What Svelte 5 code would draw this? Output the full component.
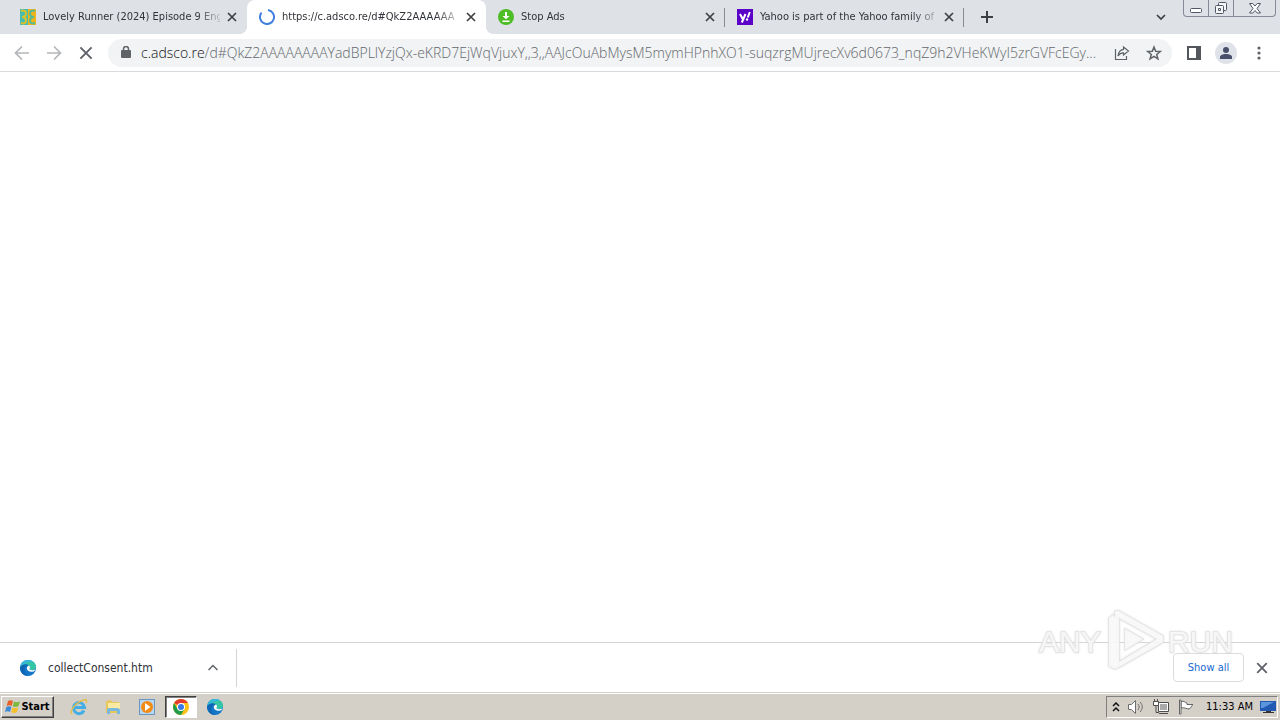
<script>
  const tabs = [
    { icon: 'drama', title: 'Lovely Runner (2024) Episode 9 Eng' },
    { icon: 'spinner', title: 'https://c.adsco.re/d#QkZ2AAAAAA', active: true },
    { icon: 'stop', title: 'Stop Ads' },
    { icon: 'yahoo', title: 'Yahoo is part of the Yahoo family of' }
  ];
  const host = 'c.adsco.re';
  const path = '/d#QkZ2AAAAAAAAYadBPLlYzjQx-eKRD7EjWqVjuxY,,3,,AAJcOuAbMysM5mymHPnhXO1-suqzrgMUjrecXv6d0673_nqZ9h2VHeKWyI5zrGVFcEGy...';
</script>

{#snippet edge(size)}
  <svg width={size} height={size} viewBox="0 0 16 16" aria-hidden="true">
    <circle cx="8" cy="8" r="8" fill="#1476c6" />
    <path d="M.2 7C1 2.500 4.300 0 8 0c4.500 0 8 3 8 6.500 0 2.500-2 3.800-4 3.800-1.600 0-2.600-.6-2.600-1.200 0-.5.6-.7.6-1.700C10 5.500 8 4.200 5.500 4.200 3 4.200 1 5.500.2 7z" fill="#35c5a5" />
    <path d="M.2 7C1 2.500 4.300 0 8 0c2 0 3.800.6 5.200 1.700C8 1.500 3 3.500.2 7z" fill="#38b6df" />
    <path d="M6.800 8.500c0-1.500.9-2.600 2.200-3 .7.5 1 1.200 1 1.900 0 1-.6 1.200-.6 1.700 0 .6 1 1.200 2.600 1.200 1.300 0 2.500-.4 3.300-1.100-.3 1.900-1.900 2.600-3.800 2.600-2.600 0-4.700-1.400-4.700-3.300z" fill="#fff" />
    <path d="M.1 7.200C1.200 5.500 3.200 4.400 5.500 4.400c1 0 1.800.2 2.500.6C6 5.500 4.300 7.500 4.300 10c0 2.700 1.700 5 4.200 6C3.500 16.200-.4 12 .1 7.200z" fill="#0f66b4" />
  </svg>
{/snippet}

{#snippet favicon(name)}
  {#if name === 'drama'}
    <svg width="16" height="16" viewBox="0 0 16 16" aria-hidden="true">
      <path fill="#49bcae" d="M0 0h8v16H0z" /><path fill="#edb51b" d="M8 0h8v16H8z" />
      <path d="M1 2c3-1 5 0 5 2.500S4 8 2 8c3 0 4 1 4 3.500S4 15 1 14" fill="none" stroke="#d9c22c" stroke-width="2" />
      <path d="M15 2c-3-1-5 0-5 2.500S12 8 14 8c-3 0-4 1-4 3.500s2 3.500 5 2.500" fill="none" stroke="#55bb96" stroke-width="2" />
    </svg>
  {:else if name === 'spinner'}
    <svg width="16" height="16" viewBox="0 0 16 16" aria-hidden="true">
      <path d="M9 1.100A7 7 0 1 1 2.500 3.700" fill="none" stroke="#3f7fe0" stroke-width="2" />
    </svg>
  {:else if name === 'stop'}
    <svg width="16" height="16" viewBox="0 0 16 16" aria-hidden="true">
      <circle cx="8" cy="8" r="8" fill="#4fbd27" />
      <path d="M7 3h2v4h2.500L8 10.300 4.500 7H7zM4.500 11.500h7V13h-7z" fill="#fff" />
    </svg>
  {:else}
    <svg width="16" height="16" viewBox="0 0 16 16" aria-hidden="true">
      <path fill="#5b00c8" d="M0 0h16v16H0z" />
      <path d="M3 5l2.700 5M8.500 5L4.800 13.500M12.800 3l-2 5.500" fill="none" stroke="#fff" stroke-width="2" />
      <circle cx="10" cy="10.500" r="1.200" fill="#fff" />
    </svg>
  {/if}
{/snippet}

{#snippet cross(size, color, width)}
  <svg width={size} height={size} viewBox="0 0 10 10" aria-hidden="true">
    <path d="M1 1l8 8M9 1L1 9" fill="none" stroke={color} stroke-width={width} />
  </svg>
{/snippet}

<div class="screen">
  <header class="strip">
    <div class="tabs" role="tablist">
      {#each tabs as tab, i}
        <div class="tab" class:active={tab.active} class:divided={i > 1}>
          {@render favicon(tab.icon)}
          <button class="title" role="tab" aria-selected={!!tab.active}>{tab.title}</button>
          <button class="close" aria-label="Close {tab.title}">{@render cross(10, '#3c4043', 1.7)}</button>
        </div>
      {/each}
    </div>
    <button class="new" aria-label="New tab">
      <svg width="12" height="12" viewBox="0 0 12 12"><path d="M6 0v12M0 6h12" stroke="#3c4043" stroke-width="2" /></svg>
    </button>
    <button class="search" aria-label="Search tabs">
      <svg width="10" height="7" viewBox="0 0 10 7"><path d="M1 1l4 4 4-4" fill="none" stroke="#3c4043" stroke-width="1.700" /></svg>
    </button>
    <div class="controls">
      <button aria-label="Minimize">
        <svg width="14" height="14" viewBox="0 0 14 14"><rect x="1.500" y="7.500" width="11" height="4" rx="1" fill="#fff" stroke="#535666" /></svg>
      </button>
      <button aria-label="Restore">
        <svg width="14" height="14" viewBox="0 0 14 14" fill="#f5f6f8" stroke="#535666"><rect x="4.500" y="1.500" width="8" height="8" rx="1" /><rect x="1.500" y="4.500" width="8" height="8" rx="1" /><path d="M4.500 7.500h2v2h-2z" /></svg>
      </button>
      <button aria-label="Close">
        <svg width="14" height="14" viewBox="0 0 14 14"><path d="M1.500 2.500h3.300L7 5l2.200-2.500h3.300L9 7.500l3.500 4.500H9.200L7 9.500 4.800 12H1.500L5 7.500z" fill="#fff" stroke="#535666" /></svg>
      </button>
    </div>
  </header>

  <nav class="toolbar">
    <button aria-label="Back"><svg width="16" height="16" viewBox="0 0 16 16"><path d="M15 8H2M8 1.500L1.500 8 8 14.500" fill="none" stroke="#b4b6b9" stroke-width="1.700" /></svg></button>
    <button aria-label="Forward"><svg width="16" height="16" viewBox="0 0 16 16"><path d="M1 8h13M8 1.500L14.500 8 8 14.500" fill="none" stroke="#b4b6b9" stroke-width="1.700" /></svg></button>
    <button aria-label="Stop loading">{@render cross(14, '#5f6368', 1.4)}</button>
    <div class="omnibox">
      <svg class="lock" width="10" height="13" viewBox="0 0 10 13" aria-hidden="true"><rect y="4" width="10" height="8" rx="1" fill="#5f6368" /><path d="M2.500 5V3a2.500 2.500 0 0 1 5 0v2" fill="none" stroke="#5f6368" stroke-width="1.500" /></svg>
      <button class="url"><span class="host">{host}</span>{path}</button>
      <button aria-label="Share">
        <svg width="16" height="16" viewBox="0 0 16 16" fill="none" stroke="#5f6368" stroke-width="1.200"><path d="M1.500 4v10.500h11V11" /><path d="M9.500 2l5 4-5 4V7.800C7 7.800 5.400 8.600 4 11c.3-3.500 2-6.200 5.500-6.700z" /></svg>
      </button>
      <button aria-label="Bookmark">
        <svg width="16" height="16" viewBox="0 0 16 16"><path d="M8 2l1.700 4.200 4.500.3-3.500 2.900 1.200 4.400L8 11.300l-3.900 2.500 1.200-4.400-3.500-2.900 4.500-.3z" fill="none" stroke="#5f6368" stroke-width="1.500" /></svg>
      </button>
    </div>
    <button aria-label="Side panel"><svg width="14" height="14" viewBox="0 0 14 14"><rect x="1" y="1" width="12" height="12" fill="#fff" stroke="#53565b" stroke-width="2" /><path d="M9 1h5v12H9z" fill="#53565b" /></svg></button>
    <button aria-label="Profile"><svg width="22" height="22" viewBox="0 0 22 22"><circle cx="11" cy="11" r="11" fill="#dfe2e8" /><circle cx="11" cy="8" r="3" fill="#474f6b" /><path d="M5 17v-2c0-2 3-3 6-3s6 1 6 3v2z" fill="#474f6b" /></svg></button>
    <button aria-label="Menu"><svg width="4" height="16" viewBox="0 0 4 16" fill="#5f6368"><circle cx="2" cy="3" r="1.600" /><circle cx="2" cy="8" r="1.600" /><circle cx="2" cy="13" r="1.600" /></svg></button>
  </nav>

  <main></main>

  <section class="downloads" aria-label="Downloads">
    <div class="item">
      {@render edge(16)}
      <a href="#file">collectConsent.htm</a>
      <button aria-label="Download options"><svg width="10" height="7" viewBox="0 0 10 7"><path d="M.500 6L5 1.500 9.500 6" fill="none" stroke="#5f6368" stroke-width="1.500" /></svg></button>
    </div>
    <button class="all">Show all</button>
    <button class="dismiss" aria-label="Close downloads">{@render cross(12, '#5f6368', 1.5)}</button>
  </section>

  <footer class="taskbar">
    <button class="start">
      <svg width="16" height="16" viewBox="0 0 16 16" aria-hidden="true">
        <path d="M3 2c2-1.300 3.500-.8 5 0L6.700 7c-1.500-.9-3-1-5 0z" fill="#e9602a" /><path d="M9 2.500c1.500.8 3.500 1 6-.3L13.500 7c-2 1.200-4 1-5.700.3z" fill="#7bb83b" />
        <path d="M1.400 8c2-1 3.500-.9 5 0L5 13c-1.500-.8-3-.9-5 0z" fill="#3a8bd8" /><path d="M7.500 8.400c1.700.8 3.500 1 5.700-.2L12 13c-2 1.300-4 1.200-5.800.3z" fill="#f5bf2b" />
      </svg>
      Start
    </button>
    <div class="apps">
      <button aria-label="Internet Explorer">
        <svg width="18" height="18" viewBox="0 0 18 18"><path d="M14 12.500A5.500 5.500 0 1 1 14.500 9.500H5" fill="none" stroke="#43aee5" stroke-width="3" /><path d="M2 16C-1 13 6 4 14 2c3-.7 3 1 2 3" fill="none" stroke="#e4bd48" stroke-width="1.500" /></svg>
      </button>
      <button aria-label="File Explorer">
        <svg width="18" height="18" viewBox="0 0 18 18"><path d="M2 3l5-1 1 2h7v11H2z" fill="#e7c65b" /><path d="M4 5h12v7H4z" fill="#fbeaa1" /><path d="M3 16v-4c0-2 2-2 3-2h7c2 0 3 1 3 2v4h-3v-3H6v3z" fill="#78b9dd" /></svg>
      </button>
      <button aria-label="Media Player">
        <svg width="18" height="18" viewBox="0 0 18 18"><rect x="1.500" y="1.500" width="15" height="15" fill="#b9d5ef" stroke="#6797c5" /><circle cx="9" cy="9" r="6" fill="#f28a15" /><path d="M7 5l5.500 4L7 13z" fill="#fff" /></svg>
      </button>
      <button class="current" aria-label="Chrome">
        <svg width="16" height="16" viewBox="0 0 16 16"><circle cx="8" cy="8" r="8" fill="#fbc116" /><path d="M8 8L1.100 4A8 8 0 0 1 14.900 4H8z" fill="#e33b2e" /><path d="M1.100 4A8 8 0 0 0 8 16l3.500-6L8 8 4.500 10z" fill="#249b49" /><circle cx="8" cy="8" r="4" fill="#fff" /><circle cx="8" cy="8" r="3" fill="#3879e8" /></svg>
      </button>
      <button aria-label="Edge">{@render edge(16)}</button>
    </div>
    <div class="tray">
      <button aria-label="Show hidden icons"><svg width="8" height="10" viewBox="0 0 8 10"><path d="M1 4l3-3 3 3M1 9l3-3 3 3" fill="none" stroke="#111" stroke-width="1.500" /></svg></button>
      <button aria-label="Volume"><svg width="18" height="18" viewBox="0 0 18 18" stroke="#6e6e6e"><path d="M1.500 6.500h3l4-4v13l-4-4h-3z" fill="#fff" /><path d="M11 6c1.500 2 1.500 4 0 6M13 4c3 3 3 7 0 10" fill="none" /></svg></button>
      <button aria-label="Network"><svg width="18" height="18" viewBox="0 0 18 18" stroke="#4e4e4e"><path d="M6.500 4.500h10v9h-10z" fill="#fff" /><path d="M8 6h7v6H8z" fill="#aaa" stroke="none" /><path d="M7 15.500h9M4 8v6.500h3" fill="none" /><path d="M1.500 3.500h5v4h-5zM2.500 1v2M5.500 1v2" fill="#fff" /></svg></button>
      <button aria-label="Action Center"><svg width="18" height="18" viewBox="0 0 18 18" fill="#fff" stroke="#666"><path d="M4 3.500c3-1 4 1 6 1.500v1.500h6c-2 1-1 3-4 4.500-3 0-4-2-8-1z" /><path d="M2.500 2v14h1.500V2z" /></svg></button>
      <time>11:33 AM</time>
      <button aria-label="Show desktop"><svg width="16" height="14" viewBox="0 0 16 14"><path d="M0 1h16v10H0z" fill="#2159b3" /><path d="M1 2h13L3 8H1z" fill="#5a96dc" /><path d="M6 11h5v1h3v1H3v-1h3z" fill="#333" /></svg></button>
    </div>
  </footer>

  <svg class="watermark" width="202" height="70" viewBox="0 0 202 70" aria-hidden="true">
    <g fill="#fff" fill-opacity=".7" stroke="#e2e2e2" stroke-width="1.500" paint-order="stroke">
      <text x="6" y="47">ANY</text>
      <text x="135" y="47">RUN</text>
      <path fill-rule="evenodd" d="M82 6l4 0 44 25v6l-5 3-37 21-6 3-6-3V13l4-3 2 2zM86 13v44l38-23zM92 24l18 10-18 11z" />
    </g>
  </svg>
</div>

<style>
  .screen {
    position: relative;
    display: flex;
    flex-direction: column;
    min-height: 100vh;
    background: #fff;
    color: #303338;
    font: 11px/16px "DejaVu Sans Condensed", "DejaVu Sans", sans-serif;
  }
  button {
    display: flex;
    align-items: center;
    justify-content: center;
    flex: none;
    padding: 0;
    border: 0;
    background: none;
    color: inherit;
    font: inherit;
  }
  svg { display: block; flex: none; }

  .strip { display: flex; height: 34px; padding-left: 8px; background: #dee1e6; }
  .tabs { display: flex; min-width: 0; }
  .tab {
    position: relative;
    display: flex;
    align-items: center;
    width: 239px;
    min-width: 0;
    box-sizing: border-box;
    padding: 0 10px 0 12px;
    gap: 7px;
  }
  .active { background: #fff; border-radius: 8px 8px 0 0; }
  .active::before, .active::after {
    content: '';
    position: absolute;
    bottom: 0;
    width: 8px;
    height: 8px;
  }
  .active::before { left: -8px; background: radial-gradient(circle at 0 0, transparent 8px, #fff 8px); }
  .active::after { right: -8px; background: radial-gradient(circle at 100% 0, transparent 8px, #fff 8px); }
  .divided::after {
    content: '';
    position: absolute;
    right: 0;
    top: 8px;
    width: 1px;
    height: 19px;
    background: #868b90;
  }
  .title {
    display: block;
    flex: 1;
    min-width: 0;
    overflow: hidden;
    white-space: nowrap;
    text-align: left;
    mask-image: linear-gradient(to right, #000 calc(100% - 24px), rgb(0 0 0 / 20%));
  }
  .close { width: 10px; }
  .new { width: 28px; margin-left: 9px; }
  .search { width: 28px; margin-left: auto; }
  .controls {
    display: flex;
    height: 17px;
    box-sizing: border-box;
    margin: 0 4px 0 8px;
    border: 1px solid #868a98;
    border-top: 0;
    border-radius: 0 0 4px 4px;
  }
  .controls button { width: 25px; border-right: 1px solid #868a98; }
  .controls button:last-child { width: 41px; border: 0; }

  .toolbar {
    display: flex;
    align-items: center;
    height: 37px;
    padding: 0 5px 0 6px;
    border-bottom: 1px solid #d8dadd;
  }
  .toolbar > button { width: 32px; height: 32px; }
  .toolbar > button:last-child { width: 33px; }
  .omnibox {
    display: flex;
    align-items: center;
    flex: 1;
    min-width: 0;
    height: 28px;
    margin: 0 6px;
    padding: 0 2px 0 13px;
    border-radius: 14px;
    background: #f1f3f4;
  }
  .omnibox button { width: 32px; }
  .omnibox .url {
    display: block;
    flex: 1;
    min-width: 0;
    margin: 0 4px 0 10px;
    overflow: hidden;
    white-space: nowrap;
    text-align: left;
    color: #63676c;
    font: 300 14px/20px "Open Sans", "Noto Sans", sans-serif;
  }
  .host { color: #101114; }

  main { flex: 1; }

  .downloads {
    display: flex;
    align-items: center;
    height: 49px;
    padding-right: 12px;
    border-top: 1px solid #d3d5d8;
  }
  .item {
    display: flex;
    align-items: center;
    width: 216px;
    height: 38px;
    border-right: 1px solid #d3d5d8;
    padding-left: 20px;
    gap: 12px;
  }
  .item a { flex: 1; color: #303338; font-size: 12px; text-decoration: none; }
  .item button { width: 24px; margin-right: 11px; }
  .all {
    width: 71px;
    height: 29px;
    margin-left: auto;
    border: 1px solid #dadce0;
    border-radius: 4px;
    color: #1967d2;
  }
  .dismiss { width: 12px; margin-left: 12px; }

  .taskbar {
    display: flex;
    align-items: center;
    height: 26px;
    padding: 0 2px 0 1px;
    background: #d4d0c8;
    border-top: 1px solid #fff;
    box-shadow: 0 -1px #d4d0c8;
    margin-top: 1px;
    color: #000;
  }
  .start {
    width: 53px;
    height: 22px;
    box-sizing: border-box;
    border: 1px solid;
    border-color: #fff #404040 #404040 #fff;
    box-shadow: inset -1px -1px #808080;
    font-weight: bold;
  }
  .apps { display: flex; margin-left: 8px; }
  .apps button { width: 34px; height: 22px; box-sizing: border-box; }
  .apps .current {
    width: 32px;
    margin: 0 1px;
    border: 1px solid;
    border-color: #404040 #fff #fff #404040;
    box-shadow: inset 1px 1px #808080;
    background: #fff;
  }
  .tray {
    display: flex;
    align-items: center;
    height: 22px;
    box-sizing: border-box;
    margin-left: auto;
    padding: 0 1px 0 5px;
    gap: 7px;
    border: 1px solid;
    border-color: #808080 #fff #fff #808080;
  }
  .tray time { margin-left: 4px; }

  .watermark {
    position: absolute;
    right: 45px;
    bottom: 45px;
    pointer-events: none;
    filter: drop-shadow(0 0 1px #e0e0e0);
  }
  .watermark text { font: 30px "Liberation Sans", sans-serif; }
</style>
